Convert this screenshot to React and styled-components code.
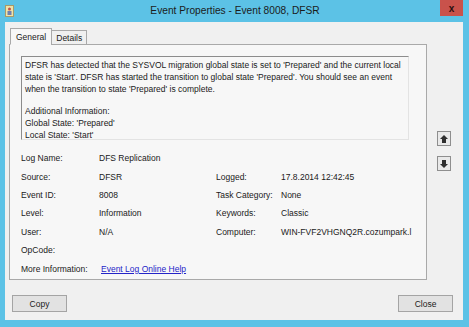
import styled, { createGlobalStyle } from 'styled-components'

const GlobalStyle = createGlobalStyle`
  html, body { margin: 0; padding: 0; background: #5cc2e6; }
  body { font-family: "Liberation Sans", Arial, sans-serif; }
`

const Window = styled.div`
  width: 469px;
  height: 327px;
  background: #5cc2e6;
  display: flex;
  flex-direction: column;
  box-sizing: border-box;
  overflow: hidden;
`

const TitleBar = styled.div`
  height: 22px;
  display: grid;
  grid-template-columns: 24px 1fr 24px;
  align-items: start;
  padding: 0 6px 0 5px;
  flex-shrink: 0;
`

const AppIcon = styled.div`
  margin-top: 3px;
  width: 9px;
  height: 12px;
`

const Title = styled.div`
  text-align: center;
  font-size: 10.2px;
  line-height: 22px;
  color: #1b1b1b;
  padding-left: 2px;
`

const CloseButton = styled.div`
  width: 23px;
  height: 16px;
  margin-left: 1px;
  background: #c9524b;
  color: #2a1010;
  font-size: 10px;
  font-weight: bold;
  display: flex;
  align-items: center;
  justify-content: center;
`

const Client = styled.div`
  flex: 1;
  margin: 0 6px 7px 5px;
  background: #f0f0f0;
  display: flex;
  flex-direction: column;
  padding: 4px 0 0 4px;
`

const Top = styled.div`
  display: flex;
`

const TabArea = styled.div`
  width: 418px;
  display: flex;
  flex-direction: column;
`

const TabStrip = styled.div`
  display: flex;
  align-items: flex-end;
  height: 18px;
  padding-left: 1px;
  position: relative;
  z-index: 1;
`

const Tab = styled.div`
  font-size: 8.5px;
  color: #1a1a1a;
  border: 1px solid #a9a9a9;
  border-bottom: ${({ $active }) => ($active ? '1px solid #f7f7f7' : '1px solid #a9a9a9')};
  background: ${({ $active }) => ($active ? '#f7f7f7' : '#f0f0f0')};
  height: ${({ $active }) => ($active ? '17px' : '15px')};
  line-height: ${({ $active }) => ($active ? '16px' : '15px')};
  padding: 0 ${({ $active }) => ($active ? '5px' : '4px')};
  margin-bottom: -1px;
  margin-left: ${({ $active }) => ($active ? '0' : '-1px')};
  box-sizing: border-box;
`

const Panel = styled.div`
  border: 1px solid #a9a9a9;
  background: #f7f7f7;
  height: 236px;
  box-sizing: border-box;
  padding: 11px 0 0 11px;
`

const MessageBox = styled.div`
  width: 388px;
  height: 84px;
  box-sizing: border-box;
  border-top: 1px solid #8c8c8c;
  border-left: 1px solid #8c8c8c;
  border-right: 1px solid #e3e3e3;
  border-bottom: 1px solid #e3e3e3;
  background: #f7f7f7;
  padding: 2px 3px;
  font-size: 8.5px;
  line-height: 12px;
  color: #1a1a1a;
`

const Para = styled.p`
  margin: 0 0 10px;
`

const Fields = styled.div`
  margin-top: 9px;
  display: grid;
  grid-template-columns: 78px 117px 65px 1fr;
  grid-auto-rows: 18.4px;
  align-items: center;
  font-size: 8.5px;
  color: #1a1a1a;
  width: 392px;
  white-space: nowrap;
`

const Label = styled.span``

const Value = styled.span`
  grid-column: ${({ $span }) => ($span ? `span ${$span}` : 'auto')};
`

const Link = styled.a`
  grid-column: span 3;
  margin-left: 2px;
  color: #2424c8;
  text-decoration: underline;
`

const SideButtons = styled.div`
  display: flex;
  flex-direction: column;
  gap: 10px;
  margin: 105px 0 0 10px;
`

const ArrowButton = styled.div`
  width: 14px;
  height: 15px;
  box-sizing: border-box;
  border: 1px solid #8e8e8e;
  background: #e9e9e9;
  display: flex;
  align-items: center;
  justify-content: center;
`

const Footer = styled.div`
  display: flex;
  justify-content: space-between;
  padding: 15px 10px 0 3px;
`

const Button = styled.div`
  width: 55px;
  height: 17px;
  box-sizing: border-box;
  border: 1px solid #a4a4a4;
  background: #e2e2e2;
  font-size: 8.5px;
  color: #1a1a1a;
  display: flex;
  align-items: center;
  justify-content: center;
`

const Arrow = ({ down }) => (
  <svg width="8" height="8" viewBox="0 0 8 8" style={{ transform: down ? 'rotate(180deg)' : 'none' }}>
    <polygon points="4,0 8,4 6,4 6,8 2,8 2,4 0,4" fill="#2e2e2e" />
  </svg>
)

const rows = [
  ['Source:', 'DFSR', 'Logged:', '17.8.2014 12:42:45'],
  ['Event ID:', '8008', 'Task Category:', 'None'],
  ['Level:', 'Information', 'Keywords:', 'Classic'],
  ['User:', 'N/A', 'Computer:', 'WIN-FVF2VHGNQ2R.cozumpark.l'],
]

export default function App() {
  return (
    <>
      <GlobalStyle />
      <Window>
        <TitleBar>
          <AppIcon>
            <svg width="9" height="12" viewBox="0 0 9 12">
              <rect x="0.5" y="0.5" width="8" height="11" fill="#efe3a8" stroke="#a99a6a" />
              <circle cx="4.5" cy="4" r="1.5" fill="#c0504d" />
              <rect x="2.5" y="6" width="4" height="4" fill="#6f7fb0" />
            </svg>
          </AppIcon>
          <Title>Event Properties - Event 8008, DFSR</Title>
          <CloseButton>x</CloseButton>
        </TitleBar>
        <Client>
          <Top>
            <TabArea>
              <TabStrip>
                <Tab $active>General</Tab>
                <Tab>Details</Tab>
              </TabStrip>
              <Panel>
                <MessageBox>
                  <Para>
                    DFSR has detected that the SYSVOL migration global state is set to 'Prepared' and the current local
                    state is 'Start'. DFSR has started the transition to global state 'Prepared'. You should see an event
                    when the transition to state 'Prepared' is complete.
                  </Para>
                  <div>Additional Information:</div>
                  <div>Global State: 'Prepared'</div>
                  <div>Local State: 'Start'</div>
                </MessageBox>
                <Fields>
                  <Label>Log Name:</Label>
                  <Value $span={3}>DFS Replication</Value>
                  {rows.map(([l1, v1, l2, v2]) => [
                    <Label key={l1}>{l1}</Label>,
                    <Value key={v1}>{v1}</Value>,
                    <Label key={l2}>{l2}</Label>,
                    <Value key={v2}>{v2}</Value>,
                  ])}
                  <Label>OpCode:</Label>
                  <Value $span={3}></Value>
                  <Label>More Information:</Label>
                  <Link href="#">Event Log Online Help</Link>
                </Fields>
              </Panel>
            </TabArea>
            <SideButtons>
              <ArrowButton><Arrow /></ArrowButton>
              <ArrowButton><Arrow down /></ArrowButton>
            </SideButtons>
          </Top>
          <Footer>
            <Button>Copy</Button>
            <Button>Close</Button>
          </Footer>
        </Client>
      </Window>
    </>
  )
}
